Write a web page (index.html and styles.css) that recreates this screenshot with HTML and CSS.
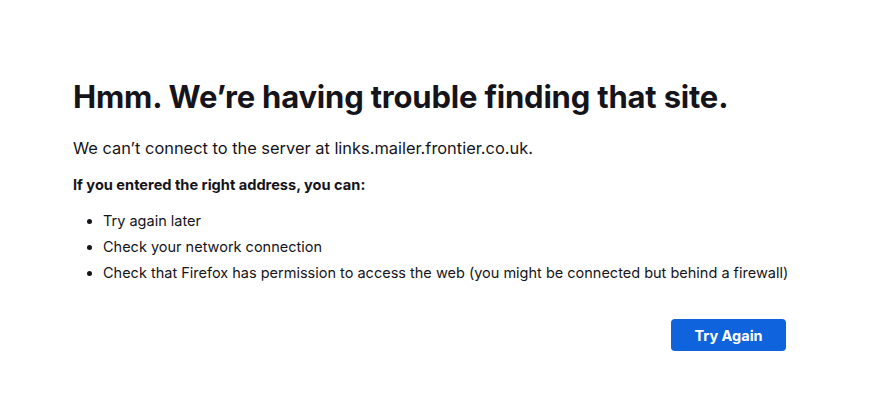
FILE: index.html
```html
<!DOCTYPE html>
<html>
<head>
<meta charset="utf-8">
<link rel="stylesheet" href="styles.css">
</head>
<body>
<div class="container">
  <h1 class="title">Hmm. We’re having trouble finding that site.</h1>
  <p class="desc">We can’t connect to the server at links.mailer.frontier.co.uk.</p>
  <p class="strong">If you entered the right address, you can:</p>
  <ul class="list">
    <li>Try again later</li>
    <li>Check your network connection</li>
    <li>Check that Firefox has permission to access the web (you might be connected but behind a firewall)</li>
  </ul>
  <div class="actions">
    <button class="btn">Try Again</button>
  </div>
</div>
</body>
</html>
```
FILE: styles.css
```css
html, body {
  margin: 0;
  padding: 0;
  background: #fff;
}
body {
  font-family: Inter, "Noto Sans", sans-serif;
  color: #15141a;
}
.container {
  width: 713px;
  padding: 78px 0 0 73px;
}
.title {
  margin: 0;
  font-size: 31px;
  font-weight: 700;
  line-height: 38px;
  letter-spacing: -0.2px;
}
.desc {
  margin: 21px 0 0;
  font-size: 16.4px;
  line-height: 22px;
}
.strong {
  margin: 16px 0 0;
  font-size: 14.6px;
  font-weight: 700;
  line-height: 20px;
}
.list {
  margin: 13px 0 0;
  padding-left: 30px;
  font-size: 14.5px;
  line-height: 26px;
  white-space: nowrap;
}
.actions {
  display: flex;
  justify-content: flex-end;
  margin-top: 33px;
}
.btn {
  width: 115px;
  height: 32px;
  background: #0f63dd;
  color: #fff;
  border: none;
  border-radius: 4px;
  font-family: Inter, "Noto Sans", sans-serif;
  font-size: 14.5px;
  font-weight: 700;
}
```
